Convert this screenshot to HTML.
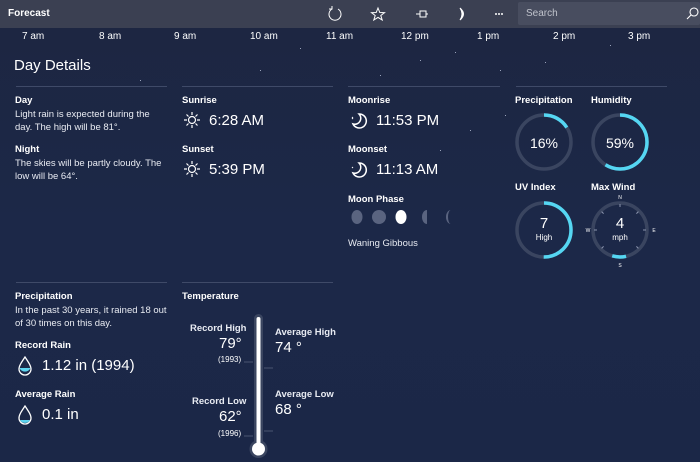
<!DOCTYPE html>
<html><head><meta charset="utf-8"><style>
*{margin:0;padding:0;box-sizing:border-box}
body{width:700px;height:462px;overflow:hidden;font-family:"Liberation Sans",sans-serif;color:#fff;background:linear-gradient(#1d2641,#1c2848 50%,#1b2747);position:relative}
.a{position:absolute;white-space:nowrap}
.hdr{position:absolute;left:0;top:0;width:700px;height:28px;background:#3b4052}
.lbl{font-size:9.5px;font-weight:bold}
.txt{font-size:9.5px;line-height:13px;color:#e8ebf2}
.big{font-size:15px}
.line{position:absolute;height:1px;background:#3f4a68}
.hr{font-size:10px;top:31px}
.st{position:absolute;width:1px;height:1px;background:#9aa3bb}
</style></head><body>
<div class="hdr"></div>
<div class="st" style="left:300px;top:48px"></div><div class="st" style="left:420px;top:60px"></div><div class="st" style="left:455px;top:52px"></div><div class="st" style="left:545px;top:62px"></div><div class="st" style="left:610px;top:45px"></div><div class="st" style="left:380px;top:75px"></div><div class="st" style="left:260px;top:70px"></div><div class="st" style="left:500px;top:70px"></div><div class="st" style="left:140px;top:80px"></div><div class="st" style="left:470px;top:130px"></div><div class="st" style="left:505px;top:115px"></div><div class="st" style="left:440px;top:150px"></div>
<div class="a" style="left:8px;top:8px;font-size:10px;font-weight:bold">Forecast</div>
<svg class="a" style="left:320px;top:0" width="200" height="28" fill="none" stroke="#fff" stroke-width="1">
<path d="M12 9 A6 6 0 1 0 18 9" /><path d="M12 6 L12 9 L9 9"/>
<path d="M58 8 L59.8 12.5 L64.5 12.7 L60.8 15.5 L62.2 20 L58 17.4 L53.8 20 L55.2 15.5 L51.5 12.7 L56.2 12.5Z"/>
<path d="M96 14 H100 M100 11 V17 H106 V11 Z M106 14 H108"/>
<path d="M140 8 Q147 14 140 20 Q144 14 140 8Z" fill="#fff"/>
<circle cx="176" cy="14" r=".5" fill="#fff"/><circle cx="179" cy="14" r=".5" fill="#fff"/><circle cx="182" cy="14" r=".5" fill="#fff"/>
</svg>
<div class="a" style="left:518px;top:2px;width:182px;height:23px;background:#484d5f;border-radius:2px"></div>
<div class="a" style="left:526px;top:8px;font-size:10px;color:#c0c3cc">Search</div>
<svg class="a" style="left:686px;top:6px" width="14" height="14" fill="none" stroke="#fff" stroke-width="1.1"><circle cx="8" cy="6" r="4"/><path d="M5 9 L1 13"/></svg>

<div class="a hr" style="left:22px">7 am</div><div class="a hr" style="left:99px">8 am</div><div class="a hr" style="left:174px">9 am</div><div class="a hr" style="left:250px">10 am</div><div class="a hr" style="left:326px">11 am</div><div class="a hr" style="left:401px">12 pm</div><div class="a hr" style="left:477px">1 pm</div><div class="a hr" style="left:553px">2 pm</div><div class="a hr" style="left:628px">3 pm</div>

<div class="a" style="left:14px;top:57px;font-size:15px">Day Details</div>
<div class="line" style="left:16px;top:86px;width:151px"></div>
<div class="line" style="left:182px;top:86px;width:151px"></div>
<div class="line" style="left:348px;top:86px;width:152px"></div>
<div class="line" style="left:516px;top:86px;width:151px"></div>

<div class="a lbl" style="left:15px;top:95px">Day</div>
<div class="a txt" style="left:15px;top:108px">Light rain is expected during the<br>day. The high will be 81°.</div>
<div class="a lbl" style="left:15px;top:144px">Night</div>
<div class="a txt" style="left:15px;top:157px">The skies will be partly cloudy. The<br>low will be 64°.</div>

<div class="a lbl" style="left:182px;top:95px">Sunrise</div>
<div class="a big" style="left:209px;top:112px">6:28 AM</div>
<div class="a lbl" style="left:182px;top:144px">Sunset</div>
<div class="a big" style="left:209px;top:161px">5:39 PM</div>
<svg class="a" style="left:182px;top:110px" width="20" height="70" fill="none" stroke="#fff" stroke-width="1.2">
<g id="s"><circle cx="10" cy="10" r="3.5"/><path d="M10 2v3M10 15v3M2 10h3M15 10h3M4.5 4.5l2 2M13.5 13.5l2 2M4.5 15.5l2-2M13.5 6.5l2-2"/></g>
<use href="#s" y="49"/></svg>

<div class="a lbl" style="left:348px;top:95px">Moonrise</div>
<div class="a big" style="left:376px;top:112px">11:53 PM</div>
<div class="a lbl" style="left:348px;top:144px">Moonset</div>
<div class="a big" style="left:376px;top:161px">11:13 AM</div>
<svg class="a" style="left:348px;top:110px" width="22" height="70" fill="none" stroke="#fff" stroke-width="1.5">
<path d="M11 4 A7 7 0 1 1 5 14 A6 6 0 0 0 11 4Z"/><path d="M4 8l1-1M4 8l1 1" stroke-width="1"/>
<path d="M11 53 A7 7 0 1 1 5 63 A6 6 0 0 0 11 53Z"/><path d="M4 57l1 1" stroke-width="1"/></svg>
<div class="a lbl" style="left:348px;top:194px">Moon Phase</div>
<svg class="a" style="left:350px;top:208px" width="110" height="18">
<ellipse cx="7" cy="9" rx="5.5" ry="7" fill="#5a6480"/><ellipse cx="29" cy="9" rx="7" ry="7" fill="#5a6480"/>
<ellipse cx="51" cy="9" rx="5.5" ry="7" fill="#fff"/>
<path d="M77 2 A5 7 0 0 0 77 16 Z" fill="#5a6480"/><path d="M101 2 A5 7 0 0 0 101 16 A3 7 0 0 1 101 2Z" fill="#5a6480"/></svg>
<div class="a txt" style="left:348px;top:237px">Waning Gibbous</div>

<div class="a lbl" style="left:515px;top:95px">Precipitation</div>
<div class="a lbl" style="left:591px;top:95px">Humidity</div>
<div class="a lbl" style="left:515px;top:182px">UV Index</div>
<div class="a lbl" style="left:591px;top:182px">Max Wind</div>
<svg class="a" style="left:500px;top:100px" width="200" height="180" fill="none" stroke-width="3.5">
<circle cx="44" cy="42" r="27" stroke="#3a4560"/>
<circle cx="44" cy="42" r="27" stroke="#55d6f2" stroke-dasharray="27.1 200" transform="rotate(-90 44 42)"/>
<circle cx="120" cy="42" r="27" stroke="#3a4560"/>
<circle cx="120" cy="42" r="27" stroke="#55d6f2" stroke-dasharray="100 200" transform="rotate(-90 120 42)"/>
<circle cx="44" cy="130" r="27" stroke="#3a4560"/>
<circle cx="44" cy="130" r="27" stroke="#55d6f2" stroke-dasharray="85 200" transform="rotate(-90 44 130)"/>
<circle cx="120" cy="130" r="27" stroke="#3a4560"/>
<circle cx="120" cy="130" r="27" stroke="#55d6f2" stroke-dasharray="14 200" transform="rotate(77 120 130)"/>
<g stroke="#8a93ad" stroke-width="1"><path d="M120 104v3M146 130h-3M94 130h3M138.4 111.6l-2 2M101.6 111.6l2 2M138.4 148.4l-2-2M101.6 148.4l2-2"/></g>
<text x="44" y="48" fill="#fff" stroke="none" font-size="14" text-anchor="middle" font-family="Liberation Sans">16%</text>
<text x="120" y="48" fill="#fff" stroke="none" font-size="14" text-anchor="middle" font-family="Liberation Sans">59%</text>
<text x="44" y="128" fill="#fff" stroke="none" font-size="15" text-anchor="middle" font-family="Liberation Sans">7</text>
<text x="44" y="140" fill="#fff" stroke="none" font-size="8" text-anchor="middle" font-family="Liberation Sans">High</text>
<text x="120" y="128" fill="#fff" stroke="none" font-size="15" text-anchor="middle" font-family="Liberation Sans">4</text>
<text x="120" y="140" fill="#fff" stroke="none" font-size="8" text-anchor="middle" font-family="Liberation Sans">mph</text>
<g fill="#fff" stroke="none" font-size="5" font-family="Liberation Sans" text-anchor="middle"><text x="120" y="99">N</text><text x="120" y="167">S</text><text x="88" y="132">W</text><text x="154" y="132">E</text></g>
</svg>

<div class="line" style="left:16px;top:282px;width:151px"></div>
<div class="line" style="left:182px;top:282px;width:151px"></div>
<div class="a lbl" style="left:15px;top:291px">Precipitation</div>
<div class="a txt" style="left:15px;top:304px">In the past 30 years, it rained 18 out<br>of 30 times on this day.</div>
<div class="a lbl" style="left:15px;top:340px">Record Rain</div>
<div class="a big" style="left:42px;top:357px">1.12 in (1994)</div>
<div class="a lbl" style="left:15px;top:389px">Average Rain</div>
<div class="a big" style="left:42px;top:406px">0.1 in</div>
<svg class="a" style="left:16px;top:355px" width="20" height="75">
<path d="M9 2 C5 8 3 11 3 14 A6 6 0 0 0 15 14 C15 11 13 8 9 2Z" fill="none" stroke="#fff" stroke-width="1.3"/>
<path d="M3.5 12 H14.5 A6 6 0 0 1 3.5 12Z" fill="#5dd4ef" transform="translate(0 1)"/>
<path d="M9 51 C5 57 3 60 3 63 A6 6 0 0 0 15 63 C15 60 13 57 9 51Z" fill="none" stroke="#fff" stroke-width="1.3"/>
<path d="M4 65 H14 A5.5 5 0 0 1 4 65Z" fill="#5dd4ef"/></svg>

<div class="a lbl" style="left:182px;top:291px">Temperature</div>
<div class="a txt" style="left:190px;top:322px;font-weight:bold">Record High</div>
<div class="a big" style="left:219px;top:335px">79°</div>
<div class="a" style="left:218px;top:355px;font-size:8px">(1993)</div>
<div class="a txt" style="left:192px;top:395px;font-weight:bold">Record Low</div>
<div class="a big" style="left:219px;top:408px">62°</div>
<div class="a" style="left:218px;top:429px;font-size:8px">(1996)</div>
<div class="a txt" style="left:275px;top:326px;font-weight:bold">Average High</div>
<div class="a big" style="left:275px;top:339px">74 °</div>
<div class="a txt" style="left:275px;top:388px;font-weight:bold">Average Low</div>
<div class="a big" style="left:275px;top:401px">68 °</div>
<svg class="a" style="left:240px;top:310px" width="40" height="152">
<rect x="14" y="4" width="9" height="140" rx="4.5" fill="#3a4560"/>
<circle cx="18.5" cy="139" r="9" fill="#3a4560"/>
<rect x="16.5" y="7" width="4" height="132" rx="2" fill="#fff"/>
<circle cx="18.5" cy="139" r="6.5" fill="#fff"/>
<path d="M4 52H13M24 58H33M4 126H13M24 121H33" stroke="#4a5470" stroke-width="1"/></svg>
</body></html>
